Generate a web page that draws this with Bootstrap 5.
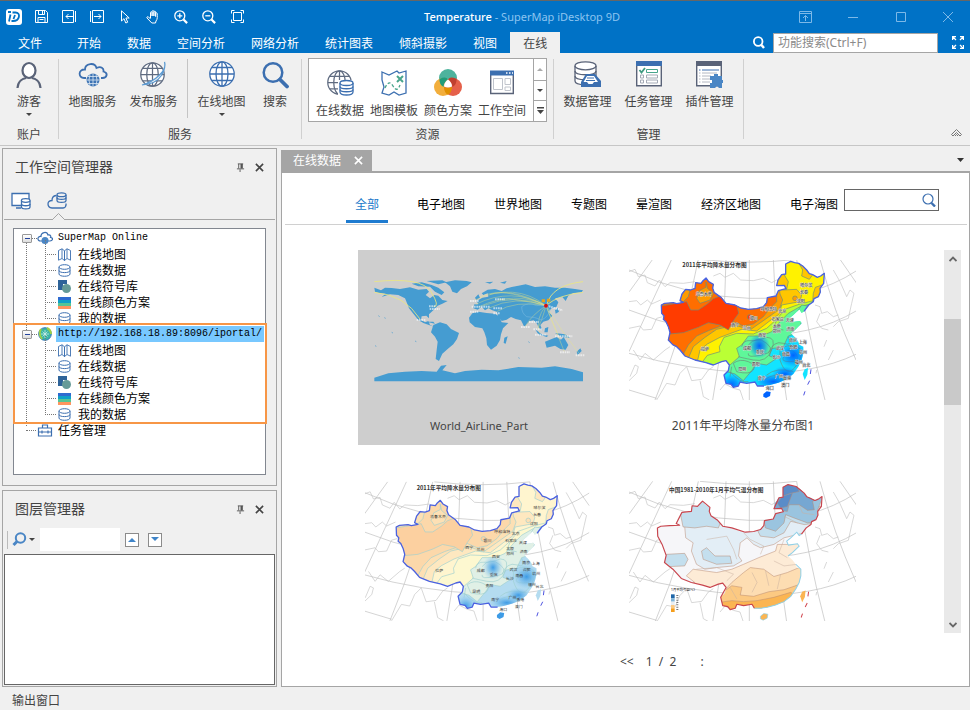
<!DOCTYPE html>
<html lang="zh-CN">
<head>
<meta charset="utf-8">
<meta name="viewport" content="width=device-width, initial-scale=1">
<title>Temperature - SuperMap iDesktop 9D</title>
<link href="https://cdn.jsdelivr.net/npm/bootstrap@5.3.0/dist/css/bootstrap.min.css" rel="stylesheet">
<style>
:root{--blue:#0072c6;--chrome:#f0f0f0;--line:#a5a5a5;--ink:#444}
body{font-family:"Noto Sans","Noto Sans CJK SC",sans-serif;font-size:12px;line-height:16px;color:var(--ink);background:var(--chrome)}
button{font:inherit;color:inherit;background:none;border:0;padding:0}
svg{display:block;flex:none}
.titlebar{background:var(--blue);border-top:1px solid #666;height:32px;color:#fff}
.app-logo{width:27px;padding-left:6px}
.quick{width:28px;height:28px}
.caption{padding-left:12px;color:#8cc4f0;font-size:11px}
.caption strong{font-weight:500;color:#fff}
.winbtn{width:48px;height:30px;color:#7db9e8}
.winbtn:last-child{width:45px}
.tabsbar{background:var(--blue);color:#fff;height:21px}
.rtab{padding:2px 13px 0;height:21px;color:#fff}
.rtab.file-tab{padding:2px 18px 0;margin-right:4px}
.rtab.active{background:var(--chrome);color:var(--ink)}
.fsearch{width:165px;height:20px;border:1px solid var(--line);padding:0 4px;color:#444;border-radius:0;font-size:12px;margin:0 14px 0 8px}
.fsearch::placeholder{color:#8a8a8a}
.expand{margin-right:6px}
.ribbon{height:93px;border-bottom:1px solid #c6c6c6}
.rgroup{padding:0 3px;border-right:1px solid #d0d0d0;margin:6px 0}
.rlabel{line-height:8px}
.ritem{width:61px;height:64px;padding-top:2px}
.ritem.narrow{width:46px}
.ritem.account{width:52px}
.ritem .pic{height:28px;margin-bottom:5px}
.ritem .caret{margin-top:3px}
.caret{width:0;height:0;border:3px solid transparent;border-top-color:#444;border-bottom:0}
.caret.up{border-top:0;border-bottom:3px solid #aaa}
.vrule{width:1px;height:59px;margin:0 3px;background:#c4c4c4}
.gallery{border:1px solid var(--line);background:#fff;height:64px;margin:-1px 3px 0}
.gitem{width:54px;padding-top:10px}
.gitem .pic{height:28px;margin-bottom:6px}
.gscroll{width:13px;border-left:1px solid var(--line)}
.gscroll button{height:21px}
.gscroll button + button{border-top:1px solid var(--line)}
.workarea{padding-left:2px}
.side{width:275px;margin:2px 4px 3px 0;gap:4px}
.panel{border:1px solid var(--line)}
.panel.upper{flex:338 0 auto}
.panel.lower{flex:1 0 197px}
.phead{height:36px;padding:0 8px 0 12px;gap:10px}
.phead h2{font-size:14px;line-height:20px;font-weight:400;margin:0;color:#444}
.viewtabs{height:35px;border-bottom:1px solid var(--line);margin:0 1px;padding:7px 0 0 7px;gap:14px}
.viewtabs button{width:22px;position:relative}
.viewtabs .notch{position:absolute;left:5px;bottom:-1px}
.treebox{margin:8px 10px;border:1px solid #828790;background:#fff;height:247px;padding-top:1px;color:#000}
.tree,.tree ul{list-style:none;margin:0;padding:0}
.tree{font-family:"Liberation Mono","Noto Sans CJK SC",monospace}
.node{display:flex;align-items:center;height:16px;white-space:nowrap}
.node .zh{font-family:"Noto Sans CJK SC",sans-serif;font-size:12px}
.node .en{font-size:10px;font-weight:500}
.tree>li{position:relative;padding-left:8px}
.tree>li:not(:last-child)::before{content:"";position:absolute;left:12px;top:13px;height:calc(100% - 9px);border-left:1px dotted #777}
.tree>li>.node{gap:5px}
.expander{width:10px;height:9px;border:1px solid #999;border-radius:1px;background:linear-gradient(#fff,#ddd);position:relative;display:flex;align-items:center;justify-content:center}
.expander::after{content:"";width:5px;height:1px;background:#24449c}
.tree>li>.node>.expander::before{content:"";position:absolute;left:9px;width:5px;border-top:1px dotted #777}
.tree>li.leaf>.node::before{content:"";width:10px;margin-left:4px;margin-right:-4px;border-top:1px dotted #777}
.tree ul{padding-left:23px}
.tree ul .node{position:relative;gap:7px;padding-left:13px}
.tree ul .node::before{content:"";position:absolute;left:0;top:-6px;height:15px;width:11px;border-left:1px dotted #777;border-bottom:1px dotted #777}
.picked{background:#78c8ff;padding:0 2px;margin-left:-2px;line-height:16px}
.callout::after{content:"";position:absolute;inset:-3px -2px -2px -1px;border:2px solid #f79646}
.ltools{height:27px;padding:0 0 2px 4px}
.grip{width:1px;height:18px;background:#bbb;margin-right:4px}
.finder{gap:2px}
.lfilter{width:80px;height:23px;border:0;background:#fff;margin:0 5px}
.step{width:14px;height:14px;border:1px solid #8b8b8b;background:#fff;margin-right:9px}
.layerlist{border:1px solid #666;background:#fff;margin:0 1px 1px}
.docstrip{height:25px;padding:4px 6px 0 0}
.doctab{background:var(--line);color:#fff;height:21px;padding:0 9px 0 12px;gap:13px}
.doc{background:#fff;border:1px solid var(--line);border-top-width:2px;padding:0 2px 0 3px;margin-bottom:3px}
.catbar{border-bottom:1px solid #d0d0d0;padding-left:61px;height:52px}
.cats{gap:29px;padding-top:15px}
.cats a{color:#000;text-decoration:none;padding:9px 0 7px;white-space:nowrap}
.cats a.active{color:#1979ca;border-bottom:3px solid #1e7bd0;padding:9px 9px 7px}
.mapsearch{width:95px;height:22px;border:1px solid #666;margin:16px 0 0 6px}
.mapsearch input{border:0;min-width:0;outline:0;background:none;padding:0 3px}
.mapsearch button{margin-right:2px}
.results{padding:25px 6px 0 73px}
.cards{display:grid;grid-template-columns:242px 242px;column-gap:22px;row-gap:26px;align-content:start}
.mapcard{min-height:162px;padding:10px 7px;text-align:center;width:242px}
.mapcard.named{min-height:195px}
.mapcard.active{background:#cecece}
.mapcard p{margin:18px 0 0}
.mapcard p.latin{font-size:11px}
.vscroll{width:17px;background:#e9e9e9}
.vscroll button{height:17px}
.thumb{height:86px;background:#c9c9c9;margin-top:52px}
.pager{height:24px;margin:17px 0 12px;padding-left:335px}
.pager button{margin-right:12px}
.status{height:21px;padding:3px 12px 0}
.arc{fill:none;stroke:#bdbdbd;stroke-width:2}
.coast{fill:none;stroke:#c4c4c4;stroke-width:2}
.iso{stroke:var(--iso);stroke-width:2;stroke-linejoin:round}
.blob{fill:var(--blob)}
.city{font:12px "Noto Sans CJK SC",sans-serif;fill:#333;stroke:var(--halo);stroke-width:2;paint-order:stroke}
.maptitle{font:600 17px "Noto Sans CJK SC",sans-serif;fill:#333}
.rain{--iso:#6d8c7a;--halo:#ddd;--c0:#12e4ff;--c1:#5ff79a;--c2:#baff35;--c3:#fff200;--c4:#ffc600;--c5:#ff9c00;--c6:#ff6e00;--c7:#ff3c00;--b:#0064ff;--blob:url(#deep-rain)}
.pale{--iso:#9fcfd0;--halo:none;--c0:#b4dcf0;--c1:#e0f0e6;--c2:#fdf8d0;--c3:#fff5cf;--c4:#fee8c0;--c5:#fde0b4;--c6:#fcd8aa;--c7:#fcd0a0;--b:#3d9be6;--blob:url(#deep-pale)}
</style>
<script src="https://cdn.jsdelivr.net/npm/bootstrap@5.3.0/dist/js/bootstrap.bundle.min.js"></script>
</head>
<body>
<svg width="0" height="0" class="position-absolute" aria-hidden="true">
<defs>
<path id="land" d="M124 165L134 160 160 158 170 161 190 157 180 152 186 132 197 118 212 120 225 115 227 98 243 100 249 92 258 84 266 95 280 103 278 115 283 128 303 142 318 160 345 165 362 174 385 178 410 176 430 170 440 158 442 143 468 138 475 122 498 116 493 106 470 107 474 90 485 74 497 72 497 42 512 34 524 38 536 40 548 48 560 60 568 71 578 74 592 82 602 78 613 70 612 85 611 100 600 115 601 126 595 140 582 146 580 155 566 165 552 184 545 188 538 178 520 195 508 205 513 217 540 213 545 220 525 240 512 250 525 262 535 275 538 284 550 290 550 310 545 330 535 350 520 372 500 388 475 398 450 405 432 408 412 408 405 396 380 400 360 396 355 408 340 412 333 403 318 400 312 375 325 362 328 345 318 332 305 335 280 345 258 338 225 330 195 318 180 300 170 290 158 284 145 270 150 248 145 230 138 215 130 208 132 198 125 190Z"/>
<path id="hainan" d="M430 432L440 424 452 426 450 438 438 444 430 440Z"/>
<path id="taiwan" d="M548 372L554 358 564 354 562 374 554 390Z"/>
<clipPath id="inland"><use href="#land"/></clipPath>
<radialGradient id="deep-rain"><stop offset="0" stop-color="#0064ff"/><stop offset=".5" stop-color="#0078ff" stop-opacity=".6"/><stop offset="1" stop-color="#0096ff" stop-opacity="0"/></radialGradient>
<radialGradient id="deep-pale"><stop offset="0" stop-color="#3d9be6"/><stop offset=".5" stop-color="#6cb6ea" stop-opacity=".6"/><stop offset="1" stop-color="#9fd0f0" stop-opacity="0"/></radialGradient>
<g id="graticule">
<path class="arc" d="M98 28L28 125M155 28L27 305M235 28Q200 220 105 450M318 28Q315 250 278 450M388 28V450M460 28Q468 250 500 450M530 28Q560 240 615 450M600 28Q640 180 708 330M660 28L710 100M27 60Q200 140 388 145T710 62M27 180Q200 250 388 256T710 182M27 310Q200 360 388 368T710 312M27 420L110 445M240 28Q388 45 530 28"/>
<path class="coast" d="M27 65L45 58 55 80 75 75 82 98 105 108 118 90 135 110 150 98 190 100 225 95M27 155L50 152 62 165 82 150 95 162 122 150M27 235L60 228 70 240 95 238 110 205 128 200M40 300L60 330 75 310 100 330 135 300 150 290M30 380L45 345 55 350 50 370 27 392M110 450L140 400 165 405 180 370 200 350 215 392 245 388 265 360 280 350M240 392L250 440 268 450M300 420L315 402 340 415 360 420 370 450M280 78L300 70 315 82 340 70 362 90 400 92 430 85 455 98 470 90M585 165L600 170 605 190 622 185 640 200 655 195M600 190L590 215 605 235 625 240M640 230L655 215 685 205 695 160 702 130 690 120 680 140 660 95 640 60M620 270L612 290M640 300L625 330M590 360L588 370"/>
</g>
<g id="rainfall">
<use href="#graticule"/>
<use href="#land" fill="var(--c0)"/>
<g clip-path="url(#inland)">
<path class="iso" fill="var(--c1)" d="M100 0H640V180L560 182 530 250 505 258 490 290 455 296 448 318 470 325 440 345 410 340 395 362 370 392 345 372 320 365 300 350 100 330Z"/>
<path class="iso" fill="var(--c2)" d="M100 0H640V155L580 160 555 166 540 170 505 190 480 215 455 245 425 258 385 258 365 285 350 295 358 320 330 345 250 350 100 330Z"/>
<path class="iso" fill="var(--c3)" d="M100 0H640V130L580 152 540 162 495 178 470 208 440 235 400 252 350 250 312 262 298 290 300 305 262 316 240 345 100 330Z"/>
<path class="iso" fill="var(--c4)" d="M100 60H475L488 120 530 118 545 135 540 155 485 165 478 192 450 212 410 243 365 238 300 262 262 282 240 300 232 335 100 330Z"/>
<path class="iso" fill="var(--c5)" d="M100 60H472L480 132 488 150 478 178 430 212 390 240 345 225 290 238 255 262 220 290 205 325 100 320Z"/>
<path class="iso" fill="var(--c6)" d="M100 60H470V155L450 175 430 200 400 222 370 228 340 215 310 226 270 240 230 258 205 285 190 312 100 300Z"/>
<path class="iso" fill="var(--c7)" d="M110 170L200 155 212 180 235 180 262 162 280 146 300 138 350 165 356 190 340 212 325 240 300 225 265 218 235 232 190 248 148 252Z"/>
<path class="iso" fill="var(--c5)" d="M190 155L205 140 210 120 190 118 176 150ZM258 96L262 115 280 130 270 150 240 160 230 145 238 122 258 112Z"/>
<path class="iso" fill="var(--c4)" d="M470 108L500 118 505 95 490 70 468 90ZM536 38L548 60 545 78 568 88 578 74 555 50ZM580 130L586 112 606 105 600 140 578 155Z"/>
<path class="iso" fill="var(--c1)" d="M535 180L545 165 565 168 550 192 530 195Z"/>
<path class="iso" fill="none" d="M365 290Q370 270 390 272T440 262Q470 262 455 300T400 330 355 320M385 285Q410 255 440 280T425 315 385 310M340 340Q360 325 385 335T400 360 350 365ZM445 310Q460 270 490 280T505 260M440 375Q470 350 520 365M430 390Q470 365 510 378M330 365Q360 400 385 395M470 210L460 235 490 240M335 350L330 380M480 300Q500 280 530 290T530 345 480 330ZM497 305Q520 295 530 315T510 335 492 320Z"/>
<circle class="iso" cx="525" cy="145" r="7" fill="var(--c5)"/><circle class="iso" cx="389" cy="201" r="7" fill="var(--c7)"/>
<g class="blob"><ellipse cx="418" cy="288" rx="32" ry="38"/><ellipse cx="520" cy="316" rx="45" ry="40"/><ellipse cx="460" cy="395" rx="58" ry="24"/><ellipse cx="335" cy="405" rx="36" ry="34"/><ellipse cx="495" cy="372" rx="40" ry="24"/></g>
</g>
<path fill="none" stroke="#4b62e0" stroke-width="4" stroke-linejoin="round" d="M552 184L566 165 580 155 582 146 595 140 601 126 600 115 611 100 612 85 613 70 602 78 592 82 578 74 568 71 560 60 548 48 536 40 524 38 512 34 497 42 497 72 485 74 474 90 470 107 493 106 498 116 475 122 468 138 442 143 440 158 430 170 410 176 385 178 362 174 345 165 318 160 303 142 283 128 278 115 280 103 266 95 258 84 249 92 243 100 227 98 225 115 212 120 197 118 186 132 180 152 190 157 170 161 160 158 134 160 124 165 125 190 132 198 130 208 138 215 145 230 150 248 145 270 158 284 170 290 180 300 195 318 225 330 258 338 280 345 305 335 318 332 328 345 325 362 312 375 318 400 333 403 340 412 355 408 360 396 380 400 405 396 412 408 432 408"/>
<use href="#hainan" fill="var(--b)"/><use href="#taiwan" fill="var(--c0)"/>
<path stroke="#4b50e0" stroke-width="3" d="M573 358L571 372M569 392L563 404M555 424L551 436"/>
<g class="city" text-anchor="middle"><text x="251" y="137">乌鲁木齐</text><text x="559" y="110">哈尔滨</text><text x="552" y="132">长春</text><text x="542" y="159">沈阳</text><text x="446" y="182">呼和浩特</text><text x="487" y="189">北京</text><text x="509" y="216">天津</text><text x="473" y="212">石家庄</text><text x="401" y="211">银川</text><text x="346" y="231">西宁</text><text x="380" y="239">兰州</text><text x="470" y="234">太原</text><text x="511" y="244">济南</text><text x="470" y="250">郑州</text><text x="427" y="260">西安</text><text x="255" y="303">拉萨</text><text x="381" y="301">成都</text><text x="420" y="313">重庆</text><text x="480" y="299">武汉</text><text x="519" y="276">南京</text><text x="520" y="298">合肥</text><text x="548" y="281">上海</text><text x="549" y="312">杭州</text><text x="498" y="318">南昌</text><text x="469" y="326">长沙</text><text x="407" y="347">贵阳</text><text x="367" y="364">昆明</text><text x="536" y="343">福州</text><text x="559" y="351">台北</text><text x="425" y="389">南宁</text><text x="477" y="384">广州</text><text x="501" y="391">香港</text><text x="496" y="411">澳门</text><text x="449" y="419">海口</text></g>
</g>
<symbol id="i-db" viewBox="0 0 13 13"><g fill="#fff" stroke="#3c6fb0"><path d="M1 3v7c0 3 11 3 11 0V3"/><ellipse cx="6.500" cy="3" rx="5.500" ry="2.300"/><path fill="none" d="M1 6.500c0 2.800 11 2.800 11 0"/></g></symbol>
<symbol id="i-fold" viewBox="0 0 13 13"><path d="M.5 2.500L4 .8v9.700L.5 12.200zM4 .8l2.500 2v9.700L4 10.500M9 .8l-2.500 2v9.700L9 10.500zM9 .8l3.500 1.700v9.700L9 10.500" fill="#fff" stroke="#3c6fb0" stroke-width=".9"/></symbol>
<symbol id="i-sym" viewBox="0 0 13 13"><path d="M0 0h9v4H5v6H0z" fill="#2e6399"/><circle cx="8.500" cy="8.500" r="4.500" fill="#659a97"/></symbol>
<symbol id="i-ramp" viewBox="0 0 13 13"><path fill="#2f6bd0" d="M0 1h13v3H0z"/><path fill="#10a0c8" d="M0 4h13v3H0z"/><path fill="#56c596" d="M0 7h13v3H0z"/><path fill="#ff955f" d="M0 10h13v3H0z"/></symbol>
<symbol id="i-globe" viewBox="0 0 26 26"><g fill="none" stroke="currentColor" stroke-width="1.300"><circle cx="13" cy="13" r="12.200" fill="#fff"/><ellipse cx="13" cy="13" rx="6" ry="12.200"/><path d="M13 1v24M1 13h24M3 6.500h20M3 19.500h20"/></g></symbol>
<symbol id="i-pin" viewBox="0 0 10 10"><path d="M2 1h6M3 1v5M6.500 1v5M1 6.500h8M4.500 7v3" stroke="#555" fill="none"/><path d="M5 1h2.500v5H5z" fill="#555"/></symbol>
<symbol id="i-x" viewBox="0 0 10 10"><path d="M1 1l8 8M9 1l-8 8" stroke="currentColor" stroke-width="1.800"/></symbol>
</defs>
</svg>

<div class="d-flex flex-column min-vh-100">
<header>
 <div class="titlebar d-flex align-items-center">
  <div class="app-logo"><svg width="16" height="16" viewBox="0 0 16 16"><rect width="16" height="16" rx="3" fill="#fff"/><path d="M2 3h3M4.500 5.500L3 12.500M6.500 3.500H9.500c5.500 0 4.500 8.500-2.500 8.500H5.500M9 6L7.500 10" fill="none" stroke="#0072c6" stroke-width="1.800"/></svg></div>
  <button class="quick d-grid justify-content-center align-content-center" aria-label="保存"><svg width="13" height="13" viewBox="0 0 13 13" fill="none" stroke="#fff"><path d="M.5.500h10l2 2v10H.5zM3.500.500v4h6v-4M7.500 1v3M3 12.500v-5h7v5M4.500 9.500h4"/></svg></button>
  <button class="quick d-grid justify-content-center align-content-center" aria-label="后退"><svg width="14" height="13" viewBox="0 0 14 13" fill="none" stroke="#fff"><path d="M11.500 2.500V.500H.5v12h11v-2M13.500 1v11M11 6.500H4M6.500 4L4 6.500 6.500 9M11.500 2v9"/></svg></button>
  <button class="quick d-grid justify-content-center align-content-center" aria-label="前进"><svg width="14" height="13" viewBox="0 0 14 13" fill="none" stroke="#fff"><path d="M2.500.500h11v12h-11zM.5 1v11M4 6.500h7M8.500 4L11 6.500 8.500 9"/></svg></button>
  <button class="quick d-grid justify-content-center align-content-center" aria-label="选择"><svg width="11" height="14" viewBox="0 0 11 14" fill="none" stroke="#fff"><path d="M1.500.800v10.200l2.500-2.300 1.800 4.300 1.900-.8L5.900 8h3.300z"/></svg></button>
  <button class="quick d-grid justify-content-center align-content-center" aria-label="漫游"><svg width="14" height="14" viewBox="0 0 14 14" fill="none" stroke="#fff"><path d="M4.500 8V2.500c0-1 1.600-1 1.600 0V6 1.500c0-1.200 1.800-1.200 1.800 0V6 2c0-1.100 1.700-1.100 1.700 0v4.500V3.500c0-1 1.600-1 1.600 0 0 3 .6 5.500-1.200 7.500L9.500 13H5.800L1 8c-.6-1.200.8-1.700 1.600-1l1.900 2"/></svg></button>
  <button class="quick d-grid justify-content-center align-content-center" aria-label="放大"><svg width="14" height="14" viewBox="0 0 14 14" fill="none" stroke="#fff" stroke-width="1.300"><circle cx="5.800" cy="5.800" r="5"/><path d="M3.300 5.800h5M5.800 3.300v5"/><path d="M9.500 9.500l3.600 3.600" stroke-width="2.200"/></svg></button>
  <button class="quick d-grid justify-content-center align-content-center" aria-label="缩小"><svg width="14" height="14" viewBox="0 0 14 14" fill="none" stroke="#fff" stroke-width="1.300"><circle cx="5.800" cy="5.800" r="5"/><path d="M3.300 5.800h5"/><path d="M9.500 9.500l3.600 3.600" stroke-width="2.200"/></svg></button>
  <button class="quick d-grid justify-content-center align-content-center" aria-label="全幅显示"><svg width="13" height="13" viewBox="0 0 13 13" fill="none" stroke="#fff"><path d="M2.500 2.500h8v8h-8zM.5 3.500v-3h3M9.500.500h3v3M12.500 9.500v3h-3M3.500 12.500h-3v-3"/></svg></button>
  <div class="caption flex-grow-1 text-center text-nowrap"><strong>Temperature</strong> - SuperMap iDesktop 9D</div>
  <button class="winbtn d-grid justify-content-center align-content-center" aria-label="功能区显示选项"><svg width="13" height="12" viewBox="0 0 13 12" fill="none" stroke="currentColor"><path d="M.5.500h12v11H.5zM.5 2.500h12M6.500 10V4.500M4 7l2.500-2.500L9 7"/></svg></button>
  <button class="winbtn d-grid justify-content-center align-content-center" aria-label="最小化"><svg width="10" height="3" viewBox="0 0 10 3"><path d="M0 2.500h10" stroke="currentColor"/></svg></button>
  <button class="winbtn d-grid justify-content-center align-content-center" aria-label="最大化"><svg width="10" height="10" viewBox="0 0 10 10"><path d="M.5.500h9v9h-9z" fill="none" stroke="currentColor"/></svg></button>
  <button class="winbtn d-grid justify-content-center align-content-center" aria-label="关闭"><svg width="10" height="10" viewBox="0 0 10 10"><path d="M0 0l10 10M10 0L0 10" stroke="currentColor"/></svg></button>
 </div>
 <div class="tabsbar d-flex align-items-center">
  <button class="rtab file-tab">文件</button><button class="rtab">开始</button><button class="rtab">数据</button><button class="rtab">空间分析</button><button class="rtab">网络分析</button><button class="rtab">统计图表</button><button class="rtab">倾斜摄影</button><button class="rtab">视图</button><button class="rtab active">在线</button>
  <label class="ms-auto" for="fs"><svg width="12" height="13" viewBox="0 0 12 13" fill="none" stroke="#fff" stroke-width="1.800"><circle cx="5.200" cy="5.500" r="4.300"/><path d="M8 8.500l3 3.500" stroke-width="2.400"/></svg></label>
  <input id="fs" class="fsearch" type="text" placeholder="功能搜索(Ctrl+F)">
  <button class="expand" aria-label="全屏"><svg width="12" height="13" viewBox="0 0 12 13" fill="none" stroke="#fff" stroke-width="1.300"><path d="M.6 4V.6H4M8 .6h3.400V4M11.400 9v3.400H8M4 12.400H.6V9M1 1l3 3M11 1L8 4M11 12L8 9M1 12l3-3"/></svg></button>
 </div>
 <div class="ribbon d-flex">
  <section class="rgroup d-flex flex-column justify-content-between align-items-center">
   <button class="ritem account d-flex flex-column align-items-center"><span class="pic"><svg width="26" height="28" viewBox="0 0 26 28" fill="none" stroke="#5a6378" stroke-width="2.200"><ellipse cx="13" cy="9.500" rx="6.500" ry="7.500" fill="#fff"/><path d="M1.500 27C2 20 7 17.500 10 17M24.500 27C24 20 19 17.500 16 17"/></svg></span>游客<span class="caret"></span></button>
   <span class="rlabel">账户</span>
  </section>
  <section class="rgroup d-flex flex-column justify-content-between align-items-center">
   <div class="d-flex">
    <button class="ritem d-flex flex-column align-items-center"><span class="pic"><svg width="30" height="27" viewBox="0 0 30 27" fill="none"><path d="M8 17H6c-6 0-6-9 1-8.500C7 2 17 1 18.500 7 23 5 26 7 25.500 10.500c5 1.500 3.500 6.500-1 6.500H23" stroke="#3c6fb0" stroke-width="1.800"/><circle cx="15" cy="19" r="6.500" fill="#3c73b4"/><path d="M15 12.500v13M8.500 19h13M10 15.500h10M10 22.500h10M12 13.500q-2 5.500 0 11M18 13.500q2 5.500 0 11" stroke="#dce8f4" stroke-width=".8"/></svg></span>地图服务</button>
    <button class="ritem d-flex flex-column align-items-center"><span class="pic" style="color:#5f6b80"><svg width="27" height="27" viewBox="0 0 27 27"><use href="#i-globe" width="25" height="25" y="1"/><path d="M24.500 1q2 6-5 13T2 24q14-1 19-9t3.500-14" fill="#f0f0f0" stroke="#5b9ad2" stroke-width="1.200"/></svg></span>发布服务</button>
    <div class="vrule"></div>
    <button class="ritem d-flex flex-column align-items-center"><span class="pic" style="color:#3c6fb0"><svg width="26" height="26"><use href="#i-globe" width="26" height="26"/></svg></span>在线地图<span class="caret"></span></button>
    <button class="ritem narrow d-flex flex-column align-items-center"><span class="pic"><svg width="27" height="28" viewBox="0 0 27 28" fill="none" stroke="#3c6fb0"><circle cx="11" cy="11.500" r="9.300" stroke-width="2.500"/><path d="M18 18.500l7 7" stroke-width="3.800" stroke-linecap="round"/></svg></span>搜索</button>
   </div>
   <span class="rlabel">服务</span>
  </section>
  <section class="rgroup d-flex flex-column justify-content-between align-items-center">
   <div class="gallery d-flex">
    <button class="gitem ms-1 d-flex flex-column align-items-center"><span class="pic" style="color:#5f6b80"><svg width="27" height="28" viewBox="0 0 27 28"><use href="#i-globe" width="25" height="25" y="1"/><path d="M11 11h16v17H11z" fill="#fff"/><g fill="#fff" stroke="#3c6fb0" stroke-width="1.300"><path d="M13 14v9c0 4 13 4 13 0v-9"/><ellipse cx="19.500" cy="14" rx="6.500" ry="2.500"/><path fill="none" d="M13 17.500c0 3 13 3 13 0M13 20.500c0 3 13 3 13 0"/></g></svg></span>在线数据</button>
    <button class="gitem d-flex flex-column align-items-center"><span class="pic"><svg width="26" height="27" viewBox="0 0 26 27" fill="none" stroke="#3c6fb0" stroke-width="1.300"><path d="M1 3l7 3 8-4 2 2 7-2v22l-7 2-5-3-5 3-7-2 2-6-2-7z"/><path d="M4 19q4-9 8-2t7-1" stroke="#48a58c" stroke-dasharray="3 2"/><path d="M16 7l6 6M22 7l-6 6" stroke="#48a58c" stroke-width="2"/></svg></span>地图模板</button>
    <button class="gitem d-flex flex-column align-items-center"><span class="pic"><svg width="28" height="27" viewBox="0 0 28 27"><circle cx="14" cy="9" r="9" fill="#4db39d"/><circle cx="9" cy="18" r="9" fill="#f2ae3c"/><circle cx="19" cy="18" r="9" fill="#e5604a"/><path d="M5.500 10Q12 7 14 10.500 10 13 9.500 18 5 15 5.500 10z" fill="#219b79"/><path d="M22.500 10Q16 7 14 10.500 18 13 18.500 18 23 15 22.500 10z" fill="#c04030"/><path d="M10 18q4 1 8 0 0 5-4 8-4-3-4-8z" fill="#e09000"/><path d="M14 10.500q4 3 4 7-4 2-8 0 0-4 4-7z" fill="#fff"/></svg></span>颜色方案</button>
    <button class="gitem me-1 d-flex flex-column align-items-center"><span class="pic"><svg width="24" height="26" viewBox="0 0 24 26"><path d="M.7 3v21.500h22.600V3" fill="#fff" stroke="#5a6378" stroke-width="1.400"/><path d="M0 1.500h24v5H0z" fill="#3c6fb0"/><path d="M16 4h1.500M19 4h1.500M22 4h1" stroke="#fff" stroke-width="1.300"/><path d="M3.500 9.500h9v11h-9zM15 9.500h5.500v6H15zM15 18h5.500v3.500H15z" fill="#fff" stroke="#c0c4cc"/></svg></span>工作空间</button>
    <div class="gscroll d-flex flex-column">
     <button class="d-grid justify-content-center align-content-center" aria-label="上一行"><span class="caret up"></span></button>
     <button class="d-grid justify-content-center align-content-center" aria-label="下一行"><span class="caret"></span></button>
     <button class="d-grid justify-content-center align-content-center" aria-label="更多"><svg width="7" height="8" viewBox="0 0 7 8" fill="#444"><path d="M0 0h7v1.500H0zM0 3h7L3.500 7z"/></svg></button>
    </div>
   </div>
   <span class="rlabel">资源</span>
  </section>
  <section class="rgroup d-flex flex-column justify-content-between align-items-center">
   <div class="d-flex">
    <button class="ritem d-flex flex-column align-items-center"><span class="pic"><svg width="27" height="27" viewBox="0 0 27 27" fill="#fff"><g stroke="#5a6378" stroke-width="1.300"><path d="M1 5v15c0 5 21 5 21 0V5"/><ellipse cx="11.500" cy="4.800" rx="10.500" ry="4"/><path fill="none" d="M1 10c0 5 21 5 21 0M1 15c0 5 21 5 21 0"/></g><path d="M7 26v-5l5-8h9l6 7v6z" fill="#3c6fb0"/><path d="M13 15h7l4 6h-4l-1.500 2h-4L13 21H9.500z"/><path d="M13 17h7M12 19.500h9" stroke="#3c6fb0"/></svg></span>数据管理</button>
    <button class="ritem d-flex flex-column align-items-center"><span class="pic"><svg width="26" height="26" viewBox="0 0 26 26" fill="none"><path d="M.7.700h24.600v24H.7z" fill="#fff" stroke="#5a6378" stroke-width="1.400"/><path d="M0 0h26v5H0z" fill="#3c6fb0"/><path d="M10.500 8.500h11v3h-11z" stroke="#48a58c"/><path d="M3.500 9l2 2.500L9 7" stroke="#3f9a80" stroke-width="1.800"/><path d="M4.500 14h3v3h-3zM4.500 19h3v3h-3zM10.500 14h11v3h-11zM10.500 19h11v3h-11z" stroke="#a4aab6"/></svg></span>任务管理</button>
    <button class="ritem d-flex flex-column align-items-center"><span class="pic"><svg width="27" height="27" viewBox="0 0 27 27" fill="none"><path d="M.7.700h24.600v24H.7z" fill="#fff" stroke="#5a6378" stroke-width="1.400"/><path d="M0 0h26v5H0z" fill="#5a6378"/><path d="M3 9h1.500M6 9h17" stroke="#3c6fb0"/><path d="M3 12h1.500M6 12h15M3 15h1.500M6 15h9M3 18h1.500M6 18h8M3 21h1.500M6 21h8" stroke="#b4b8c2"/><path d="M14 27v-5h2v-3h-2v-4h4v-2h4v2h4v4h1v3h-1v5h-3l-2-2-2 2z" fill="#4a86c5"/></svg></span>插件管理</button>
   </div>
   <span class="rlabel">管理</span>
  </section>
  <button class="ms-auto align-self-end me-2 mb-2" aria-label="折叠功能区"><svg width="11" height="8" viewBox="0 0 11 8" fill="none" stroke="#777"><path d="M.5 5.500l5-5 5 5-1.500 1.500-3.500-3.500L2 7zM4 7l1.500-1.500L7 7"/></svg></button>
 </div>
</header>

<main class="workarea d-flex flex-grow-1">
 <aside class="side d-flex flex-column flex-shrink-0">
  <section class="panel upper">
   <div class="phead d-flex align-items-center"><h2 class="me-auto">工作空间管理器</h2><button aria-label="固定"><svg width="9" height="9"><use href="#i-pin"/></svg></button><button class="me-1" aria-label="关闭面板"><svg width="9" height="9"><use href="#i-x"/></svg></button></div>
   <div class="viewtabs d-flex align-items-start">
    <button aria-label="本地"><svg width="20" height="18" viewBox="0 0 20 18" fill="#fff" stroke="#3c6fb0" stroke-width="1.300"><path d="M10 13.500H1V1.500h17V7M5 16h5"/><path d="M10.500 8.500V15c0 2.500 8.500 2.500 8.500 0V8.500"/><ellipse cx="14.700" cy="8.500" rx="4.300" ry="1.800"/><path fill="none" d="M10.500 12c0 2.300 8.500 2.300 8.500 0"/></svg></button>
    <button class="h-100 d-flex align-items-start" aria-label="在线"><svg width="20" height="18" viewBox="0 0 20 18" fill="none" stroke="#3c6fb0" stroke-width="1.300"><path d="M9 3.500Q5 4 5 8.500 1 8.500 1 12t4 4h11q3.500-.5 3-4.500"/><path d="M10 3v5.500c0 2.500 9 2.500 9 0V3"/><ellipse cx="14.500" cy="2.800" rx="4.500" ry="1.900"/><path d="M10 5.500c0 2.500 9 2.500 9 0"/></svg><svg class="notch" width="13" height="7" viewBox="0 0 13 7"><path d="M0 7L6.500.500 13 7" fill="#f0f0f0" stroke="#a5a5a5"/></svg></button>
   </div>
   <div class="treebox">
    <ul class="tree">
     <li><div class="node"><span class="expander"></span><svg width="16" height="14" viewBox="0 0 16 14"><path d="M5 10H3.500C0 10 0 5 4 5.500 4 1 10 0 11 4c3-.5 3 1.500 2.500 2.500C17 7 15.500 10 13 10h-2" fill="none" stroke="#3c6fb0" stroke-width="1.200"/><circle cx="8" cy="9.500" r="3.500" fill="#4a86c5"/></svg><span class="en">SuperMap Online</span></div>
      <ul>
       <li class="node"><svg width="13" height="13"><use href="#i-fold"/></svg><span class="zh">在线地图</span></li>
       <li class="node"><svg width="13" height="13"><use href="#i-db"/></svg><span class="zh">在线数据</span></li>
       <li class="node"><svg width="13" height="13"><use href="#i-sym"/></svg><span class="zh">在线符号库</span></li>
       <li class="node"><svg width="13" height="13"><use href="#i-ramp"/></svg><span class="zh">在线颜色方案</span></li>
       <li class="node"><svg width="13" height="13"><use href="#i-db"/></svg><span class="zh">我的数据</span></li>
      </ul></li>
     <li class="callout"><div class="node"><span class="expander"></span><svg width="16" height="14" viewBox="-1 0 16 14"><circle cx="7" cy="7" r="6.300" fill="#3bb5a5" stroke="#3977b8"/><path d="M3 2q-3 5 1 10M9 1q4 2 4 6" stroke="#9dd04a" stroke-width="2" fill="none"/><path d="M7 3v8M3 7h8M4.500 4.500l5 5M9.500 4.500l-5 5" stroke="#d8f2ee" stroke-width=".7"/></svg><span class="en picked">http://192.168.18.89:8096/iportal/</span></div>
      <ul>
       <li class="node"><svg width="13" height="13"><use href="#i-fold"/></svg><span class="zh">在线地图</span></li>
       <li class="node"><svg width="13" height="13"><use href="#i-db"/></svg><span class="zh">在线数据</span></li>
       <li class="node"><svg width="13" height="13"><use href="#i-sym"/></svg><span class="zh">在线符号库</span></li>
       <li class="node"><svg width="13" height="13"><use href="#i-ramp"/></svg><span class="zh">在线颜色方案</span></li>
       <li class="node"><svg width="13" height="13"><use href="#i-db"/></svg><span class="zh">我的数据</span></li>
      </ul></li>
     <li class="leaf"><div class="node"><svg width="16" height="13" viewBox="0 0 16 13" fill="none" stroke="#3c6fb0" stroke-width="1.200"><path d="M1.500 4h13v8h-13zM5.500 4V1h5v3M1.500 8h13M5 6.500v3M11 6.500v3"/></svg><span class="zh">任务管理</span></div></li>
    </ul>
   </div>
  </section>
  <section class="panel lower d-flex flex-column">
   <div class="phead d-flex align-items-center"><h2 class="me-auto">图层管理器</h2><button aria-label="固定"><svg width="9" height="9"><use href="#i-pin"/></svg></button><button class="me-1" aria-label="关闭面板"><svg width="9" height="9"><use href="#i-x"/></svg></button></div>
   <div class="ltools d-flex align-items-center">
    <span class="grip"></span>
    <button class="finder d-flex align-items-center" aria-label="查找图层"><svg width="15" height="15" viewBox="0 0 15 15" fill="none" stroke="#4a86c5"><circle cx="8.500" cy="6" r="4.700" stroke-width="2"/><path d="M5 9.500L1.500 13" stroke-width="3"/></svg><span class="caret"></span></button>
    <input class="lfilter" type="text" aria-label="图层名称">
    <button class="step d-grid justify-content-center align-content-center" aria-label="上一个"><svg width="8" height="5" viewBox="0 0 8 5"><path d="M0 5l4-4 4 4z" fill="#3f84c8"/></svg></button>
    <button class="step d-grid justify-content-center align-content-center" aria-label="下一个"><svg width="8" height="5" viewBox="0 0 8 5"><path d="M0 0l4 4 4-4z" fill="#3f84c8"/></svg></button>
   </div>
   <div class="layerlist flex-grow-1"></div>
  </section>
 </aside>

 <section class="d-flex flex-column flex-grow-1">
  <div class="docstrip d-flex align-items-center justify-content-between">
   <div class="doctab d-flex align-items-center"><span>在线数据</span><button aria-label="关闭标签"><svg width="9" height="9"><use href="#i-x"/></svg></button></div>
   <button aria-label="窗口列表"><svg width="7" height="5" viewBox="0 0 7 5"><path d="M0 0h7L3.500 4z" fill="#333"/></svg></button>
  </div>
  <div class="doc flex-grow-1 d-flex flex-column">
   <div class="catbar d-flex align-items-start">
    <nav class="cats d-flex"><a class="active" href="#">全部</a><a href="#">电子地图</a><a href="#">世界地图</a><a href="#">专题图</a><a href="#">晕渲图</a><a href="#">经济区地图</a><a href="#">电子海图</a></nav>
    <div class="mapsearch d-flex align-items-center"><input class="flex-grow-1" type="text" aria-label="搜索地图"><button aria-label="搜索"><svg width="14" height="14" viewBox="0 0 14 14" fill="none" stroke="#3c6fb0"><circle cx="6" cy="6" r="5" stroke-width="1.200"/><path d="M9.500 10l3.500 3.500" stroke-width="2.400"/></svg></button></div>
   </div>
   <div class="results d-flex justify-content-between">
    <div class="cards">
     <article class="mapcard named active">
      <svg width="227" height="140" viewBox="30 45 681 420" role="img" aria-label="World_AirLine_Part">
       <g fill="#459cd1"><path d="M58 128L78 136 90 128 110 129 135 132 165 127 190 134 215 132 222 140 212 150 225 160 238 150 250 152 262 165 278 168 262 176 248 182 235 196 222 208 222 220 214 212 200 214 198 224 210 232 220 228 225 240 240 246 228 242 205 234 190 225 175 206 162 190 155 172 150 160 130 150 105 148 80 156 92 146 72 144 60 140ZM170 116L200 112 230 120 250 128 268 142 260 150 240 140 225 125 190 124ZM215 108L262 106 275 112 250 118ZM270 112L300 106 335 108 350 112 336 124 318 132 306 145 292 140 285 124ZM235 240L255 232 275 238 288 252 312 264 306 282 295 298 278 312 262 326 252 348 242 342 245 315 248 290 240 275 228 262ZM352 205L370 200 395 204 420 206 432 214 440 232 460 234 444 250 438 268 435 285 425 302 408 314 396 300 394 280 388 262 382 250 360 246 344 232 342 218ZM448 278L458 274 452 296 446 294ZM355 190L358 178 370 178 365 168 382 158 400 155 398 145 385 150 380 145 398 134 420 132 440 138 455 130 470 126 490 122 512 118 540 126 570 124 600 128 630 128 660 132 684 136 680 142 655 144 640 152 632 168 622 156 600 160 610 172 604 186 590 190 580 200 592 212 580 226 565 230 556 240 562 256 552 250 546 236 536 226 524 228 508 246 498 226 482 222 468 216 455 224 440 228 430 214 425 200 412 196 400 190 390 196 380 185 368 194ZM364 165L375 158 370 148 360 158ZM600 196L608 188 612 200 602 206ZM540 252L560 268 580 272 575 276 550 268ZM570 250L580 246 578 262 568 262ZM600 264L630 268 645 278 620 276ZM570 290L590 282 605 276 618 284 626 276 640 300 632 314 616 312 600 302 575 308ZM665 320L676 310 680 318 668 330ZM435 113L455 108 450 116ZM390 112L415 110 405 116ZM215 230L235 230 240 236Z"/>
       <path d="M58 398L100 385 150 380 200 378 245 380 258 362 275 360 262 376 300 385 330 378 380 374 430 376 490 366 560 368 600 364 650 372 684 382V409H58Z"/>
       <path d="M70 212l4 3M88 218l4 2M110 262l4 2M180 288l4 2M60 302l4 2M490 338l4 2M520 290l4 3" stroke="#459cd1" stroke-width="2"/></g>
       <g fill="none" stroke="#ece77f" stroke-width="2.500"><path d="M58 110Q200 95 228 140T236 185M58 142Q150 150 195 222M684 110Q590 120 575 180M684 142Q610 150 575 180"/><g stroke-width="1.600" opacity=".7"><path d="M573 182Q480 110 360 165M573 182Q470 125 362 178M573 182Q480 135 370 186M573 182Q480 145 385 182M573 182Q480 150 400 190M573 182Q490 160 430 162M573 182Q480 165 425 200M573 182Q460 120 375 155M573 182Q460 130 405 148M573 182Q540 220 555 265M573 182Q560 230 548 250M573 182Q530 210 510 245M573 182Q600 250 628 320M573 182Q620 260 672 325M573 182Q590 230 610 270"/></g></g>
       <path d="M500 185Q520 170 545 182 570 175 585 195 580 215 560 225 540 215 515 215 500 205 500 185" fill="none" stroke="#7fbde0" stroke-width="1.500"/>
       <path d="M185 225h28M224 192h30M222 184h20M345 168h28M350 185h55M345 200h25M420 163h30M415 190h26M415 205h20M498 246h26M522 231h30M535 253h28M540 269h32M600 274h52M615 322h30M662 331h28M575 182l48 14" stroke="#fff" stroke-width="6" stroke-dasharray="5 2" opacity=".6"/>
       <path d="M560 167h10M576 166h10" stroke="#e3a51e" stroke-width="9"/><circle cx="573" cy="182" r="6" fill="#d01218"/>
      </svg>
      <p class="latin">World_AirLine_Part</p>
     </article>
     <article class="mapcard named">
      <svg class="rain" width="227" height="140" viewBox="27 30 681 420" role="img" aria-label="2011年平均降水量分布图"><use href="#rainfall"/><text class="maptitle" x="187" y="50">2011年平均降水量分布图</text></svg>
      <p>2011年平均降水量分布图1</p>
     </article>
     <article class="mapcard">
      <svg class="pale" width="227" height="140" viewBox="30 33 681 420" role="img" aria-label="2011年平均降水量分布图"><use href="#rainfall" transform="translate(1 8) scale(.988)"/><text class="maptitle" x="185" y="59">2011年平均降水量分布图</text></svg>
     </article>
     <article class="mapcard">
      <svg width="227" height="140" viewBox="27 33 681 420" role="img" aria-label="中国1981-2010年1月平均气温分布图">
       <use href="#graticule" transform="translate(0 6)"/>
       <g transform="translate(-13 10) scale(1.010 .992)">
        <use href="#land" fill="#fdebd6"/>
        <g clip-path="url(#inland)" stroke="#b98a72" stroke-width="1.500">
         <path fill="#f6f6f9" d="M100 0H640V200L530 190 520 215 480 215 475 235 425 255 380 275 345 290 300 300 230 290 210 310 235 330 100 340Z"/>
         <path fill="#e3eef6" d="M205 160L230 150 300 140 440 150 560 100 640 150 560 180 500 195 470 215 430 225 410 215 390 195 370 210 365 250 375 265 350 280 300 285 265 290 240 275 225 235 230 210 208 195Z"/>
         <path fill="#c4dfee" d="M190 110L200 162 235 165 270 160 305 165 315 140 270 80ZM255 235L270 225 295 250 340 250 345 272 300 275 260 260ZM150 245L205 242 215 260 205 280 160 282 140 262ZM420 170L430 190 470 195 500 180 520 145 560 155 600 150 620 100 480 100Z"/>
         <path fill="#9ac4df" d="M440 140L445 165 475 175 500 150 505 125 530 135 570 150 600 145 600 110 620 60 480 20 465 110Z"/>
         <path fill="#76a7d2" d="M460 110L510 115 515 95 545 95 570 112 590 110 585 85 600 75 530 20 480 40Z"/><path fill="#5a8cc8" d="M480 75L520 60 545 55 535 30 495 30 495 70 480 90 490 105 510 100 525 60"/>
         <path fill="#fdddb2" d="M345 330L380 300 400 285 440 290 470 312 510 300 545 285 570 300 550 360 400 420 300 420 300 380Z"/>
         <path fill="#fcc982" d="M310 365L345 340 375 345 370 368 410 372 455 358 500 352 540 338 560 345 540 400 400 420 300 420Z"/>
         <path fill="#fbb552" d="M310 390L345 385 380 388 420 385 470 375 520 360 535 370 500 410 400 420 320 420Z"/>
         <path fill="none" stroke="#c9b0a0" d="M240 290L300 285 350 305 330 325M380 180L400 200 440 220 430 245M405 300L420 330 405 360M445 295L455 340M490 305L480 350M470 265L500 280 540 275M270 200L330 190 350 230 360 260M500 200L485 240 510 255M500 130L540 150M545 95L555 120 590 125M340 345L360 380"/>
        </g>
        <path fill="none" stroke="#8fd0e8" stroke-width="3" d="M552 184L545 188 538 178 520 195 508 205 513 217 540 213 545 220 525 240 512 250M535 275L550 290 550 310 545 330 535 350 520 372 500 388 475 398 450 405 432 408 412 408"/>
        <path fill="none" stroke="#c8454e" stroke-width="3.500" stroke-linejoin="round" d="M552 184L566 165 580 155 582 146 595 140 601 126 600 115 611 100 613 70 602 78 592 82 568 71 560 60 536 40 512 34 497 42 497 72 485 74 470 107 493 106 498 116 475 122 468 138 442 143 440 158 430 170 410 176 385 178 345 165 318 160 303 142 283 128 278 115 280 103 258 84 243 100 227 98 225 115 197 118 180 152 190 157 160 158 134 160 124 165 125 190 138 215 150 248 145 270 170 290 195 318 225 330 258 338 280 345 305 335 318 332 328 345 312 375 318 400 333 403 340 412 355 408 360 396 380 400 405 396 412 408"/>
        <use href="#hainan" fill="#fbb552" stroke="#8fd0e8" stroke-width="2"/><use href="#taiwan" fill="#fbb552"/>
        <path stroke="#d0454e" stroke-width="3" d="M573 358L571 372M569 392L563 404M555 424L551 436"/>
       </g>
       <text class="maptitle" x="147" y="65">中国1981-2010年1月平均气温分布图</text>
       <text x="153" y="364" font-size="10">1月平均气温(℃)</text>
       <path fill="#1f66a8" d="M153 373h11v12h-11z"/><path fill="#7fb4d8" d="M153 385h11v10h-11z"/><path fill="#e8eef2" d="M153 395h11v10h-11z"/><path fill="#fcc982" d="M153 405h11v10h-11z"/><path fill="#f59e1c" d="M153 415h11v11h-11z"/>
       <path d="M172 375v48" stroke="#777" stroke-width="6" stroke-dasharray="3 4"/>
      </svg>
     </article>
    </div>
    <div class="vscroll d-flex flex-column">
     <button class="d-grid justify-content-center align-content-center" aria-label="向上滚动"><svg width="8" height="6" viewBox="0 0 8 6"><path d="M.5 5L4 1.500 7.500 5" fill="none" stroke="#666" stroke-width="1.800"/></svg></button>
     <div class="thumb"></div>
     <button class="mt-auto d-grid justify-content-center align-content-center" aria-label="向下滚动"><svg width="8" height="6" viewBox="0 0 8 6"><path d="M.5 1L4 4.500 7.500 1" fill="none" stroke="#666" stroke-width="1.800"/></svg></button>
    </div>
   </div>
   <div class="pager d-flex align-items-center"><button aria-label="首页">&lt;&lt;</button><span>1&nbsp; /&nbsp; 2</span><button class="ms-4" aria-label="下一页">:</button></div>
  </div>
 </section>
</main>
<footer class="status"><span>输出窗口</span></footer>
</div>
</body>
</html>
